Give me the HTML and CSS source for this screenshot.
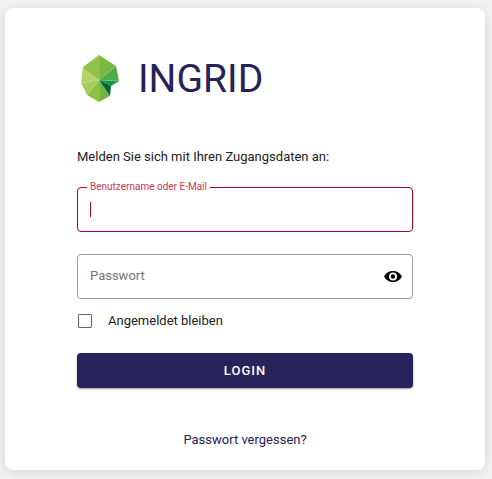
FILE: index.html
```html
<!DOCTYPE html>
<html lang="de">
<head>
  <meta charset="utf-8">
  <meta name="viewport" content="width=device-width, initial-scale=1">
  <title>InGrid Login</title>
  <link rel="stylesheet" href="styles.css">
</head>
<body>
  <main class="card">
    <header class="brand">
      <svg class="brand-logo" viewBox="0 0 40 50" aria-hidden="true">
        <path fill="#92c346" d="M19 1 3 13 2 28 19 26Z"/>
        <path fill="#78b942" d="M19 1 36 12 19 26Z"/>
        <path fill="#b5d468" d="M3 14 1 29 19 26Z"/>
        <path fill="#a5cc58" d="M1 29 7 41 19 26Z"/>
        <path fill="#8bc243" d="M7 41 19 48 19 26Z"/>
        <path fill="#6fb744" d="M19 48 30 42 19 26Z"/>
        <path fill="#4aac48" d="M36 12 39 27 19 26Z"/>
        <path fill="#159447" d="M39 27 31 32 19 26Z"/>
        <path fill="#04652f" d="M31 32 30 42 19 26Z"/>
        <path fill="none" stroke="#c5e0a0" stroke-width=".3" d="M19 1V48M3 14 19 26 36 12M1 29 19 26 39 27M7 41 19 26"/>
      </svg>
      <h1 class="brand-name">INGRID</h1>
    </header>

    <form class="login">
      <p class="intro">Melden Sie sich mit Ihren Zugangsdaten an:</p>

      <div class="field field-active">
        <label class="field-label" for="username">Benutzername oder E-Mail</label>
        <input class="field-input" id="username" type="text" autocomplete="username">
        <span class="caret"></span>
      </div>

      <div class="field">
        <input class="field-input" id="password" type="password" placeholder="Passwort" aria-label="Passwort" autocomplete="current-password">
        <button class="reveal" type="button" aria-label="Passwort anzeigen">
          <svg class="reveal-icon" viewBox="0 0 20 20" aria-hidden="true">
            <path fill-rule="evenodd" d="M10 4C6 4 2.600 6 1 9.500 2.600 13 6 15 10 15s7.400-2 9-5.500C17.400 6 14 4 10 4Zm0 1.500a4 4 0 1 1 0 8 4 4 0 0 1 0-8Zm0 1.800a2.200 2.200 0 1 0 0 4.400 2.200 2.200 0 0 0 0-4.400Z"/>
          </svg>
        </button>
      </div>

      <label class="remember">
        <input class="remember-box" type="checkbox">
        <span>Angemeldet bleiben</span>
      </label>

      <button class="submit" type="submit">LOGIN</button>
    </form>

    <a class="forgot" href="#">Passwort vergessen?</a>
  </main>
</body>
</html>
```
FILE: styles.css
```css
:root {
  --navy: #28225a;
  --error: #b00020;
  --ink: #212121;
}

* {
  box-sizing: border-box;
}

body {
  margin: 0;
  padding: 8px 7px 8px 5px;
  background: #f2f2f2;
  color: var(--ink);
  font: 13px/20px Roboto, sans-serif;
}

.card {
  display: flex;
  flex-direction: column;
  max-width: 480px;
  margin: 0 auto;
  padding: 46px 72px 20px;
  border-radius: 8px;
  background: #fff;
  box-shadow: 0 2px 12px rgba(0, 0, 0, 0.12);
}

.brand {
  display: flex;
  align-items: center;
  gap: 18px;
  padding-left: 3px;
}

.brand-logo {
  width: 40px;
  height: 50px;
}

.brand-name {
  margin: 0;
  color: var(--navy);
  font-size: 39px;
  font-weight: 400;
  line-height: 50px;
}

.login {
  display: flex;
  flex-direction: column;
  margin-top: 43px;
}

.intro {
  margin: 0 0 20px;
}

.field {
  position: relative;
  display: flex;
  align-items: center;
  height: 45px;
  margin-bottom: 22px;
  border: 1px solid #9e9e9e;
  border-radius: 4px;
}

.field-active {
  border-color: var(--error);
}

.field-label {
  position: absolute;
  top: -9px;
  left: 9px;
  padding: 0 3px;
  background: #fff;
  color: #c23a54;
  font-size: 10px;
  line-height: 16px;
}

.field-input {
  flex: 1;
  min-width: 0;
  height: 100%;
  padding: 0 12px 2px;
  border: 0;
  outline: 0;
  background: transparent;
  color: var(--ink);
  font: inherit;
}

.field-input::placeholder {
  color: #757575;
}

.caret {
  position: absolute;
  top: 14px;
  left: 12px;
  width: 1px;
  height: 15px;
  background: var(--error);
}

.reveal {
  display: flex;
  margin-right: 9px;
  padding: 0;
  border: 0;
  background: none;
}

.reveal-icon {
  width: 20px;
  height: 20px;
}

.remember {
  display: flex;
  align-items: center;
  gap: 16px;
  margin-top: -10px;
}

.remember-box {
  appearance: none;
  width: 14px;
  height: 14px;
  margin: 0 0 0 1px;
  border: 1px solid #616161;
  border-radius: 1px;
}

.remember-box:checked {
  background: var(--navy);
}

.submit {
  height: 35px;
  margin-top: 22px;
  border: 0;
  border-radius: 4px;
  background: var(--navy);
  color: #fff;
  font: 500 13px/20px Roboto, sans-serif;
  letter-spacing: 1px;
  box-shadow: 0 1px 2px rgba(0, 0, 0, 0.4);
}

.forgot {
  align-self: center;
  margin-top: 42px;
  color: var(--navy);
  text-decoration: none;
}
```
